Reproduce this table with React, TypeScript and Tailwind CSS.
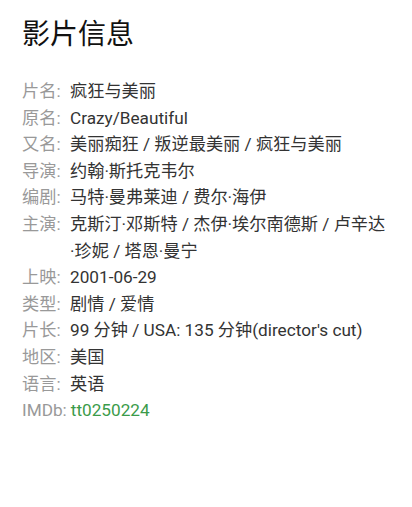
const rows: { label: string; value: string }[] = [
  { label: '片名', value: '疯狂与美丽' },
  { label: '原名', value: 'Crazy/Beautiful' },
  { label: '又名', value: '美丽痴狂 / 叛逆最美丽 / 疯狂与美丽' },
  { label: '导演', value: '约翰·斯托克韦尔' },
  { label: '编剧', value: '马特·曼弗莱迪 / 费尔·海伊' },
  // word joiner keeps "·珍" together so the line breaks before the dot
  { label: '主演', value: '克斯汀·邓斯特 / 杰伊·埃尔南德斯 / 卢辛达·\u2060珍妮 / 塔恩·曼宁' },
  { label: '上映', value: '2001-06-29' },
  { label: '类型', value: '剧情 / 爱情' },
  { label: '片长', value: "99 分钟 / USA: 135 分钟(director's cut)" },
  { label: '地区', value: '美国' },
  { label: '语言', value: '英语' },
];

export default function App() {
  return (
    <div
      className="w-[412px] h-[507px] bg-white px-[22px] pt-[14px]"
      style={{ fontFamily: 'Roboto, "Noto Sans CJK SC", sans-serif' }}
    >
      <h1 className="text-[28px] leading-[42px] text-[#111]">影片信息</h1>

      <div className="mt-[22px] text-[17.2px] leading-[26.6px]">
        {rows.map((r) => (
          <div key={r.label} className="flex">
            <span className="w-[48px] shrink-0 text-[#999]">{r.label}:</span>
            <span className="flex-1 text-[#333]">{r.value}</span>
          </div>
        ))}
        <div className="flex">
          <span className="text-[#999]">IMDb:</span>
          <span className="ml-[4px] text-[#3b9b4a]">tt0250224</span>
        </div>
      </div>
    </div>
  );
}
